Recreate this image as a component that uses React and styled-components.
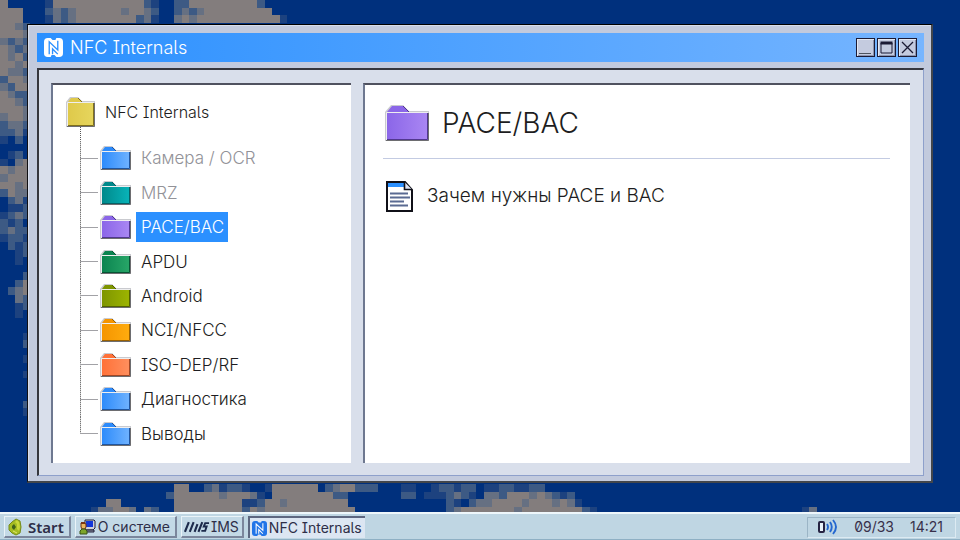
import React, { useId } from "react";
import styled, { createGlobalStyle } from "styled-components";

const Global = createGlobalStyle`
  * { box-sizing: border-box; }
  html, body { margin: 0; padding: 0; }
  body, button {
    font-family: Inter, "Liberation Sans", sans-serif;
    font-feature-settings: "cv08" 1, "cv05" 1, "zero" 1;
  }
  button { margin: 0; cursor: pointer; }
`;

const SHADES = { a: "#1d427f", b: "#3d5a84", c: "#667082", d: "#837d7d" };

const CLOUDS = [
  { col: 0, row: 0, cells: [
    "d.....addddddddddddba..bbdddddddddb",
    "ddd...bcbcddddddcddcb..bcbcddddddddd",
    "ddd...acbcddddddddbca..cdcddddddddddda",
    "ddcb", "dddc", "cbcb", "dcbc", "dcdb", "ddcd", "dccb", "bddc", "cbdd", "dcbb", "ddcb",
    "dddc", "cddc", "bccb", "bbca", "a.b.", "....", ".ab.", "a.cd", "dcdd", "cddd", "ddcd",
    "bdcc", ".bca", ".aab", "abcb", "bab.", "bcbb", "abba", ".bab", "..ab", "..a.", "....",
    "...b", "..bd", ".bcd", "..cb", "..ab", "..a.", "....", "....", "...a", "...b", "....",
    "...a", "....", "...a", "....", "....", "....", "...b", "...a",
  ] },
  { col: 12, row: 64, cells: [
    "...........dd..bcabba..adddddd.bcddbbb...aa..abbabb.aabbaabb",
    "..........bddddddcdddca.ddddddddbb.......bb.aaabcba.ccbdddcdcbab",
    "..dd.......dddddddddaabddcdddddddd.............ba.bccddddcdddcdca",
    "accddc.cb..dddddddddbdcdddddddddddd............bcdddddddcddddddddba...........................ac",
  ] },
];

const FOLDERS = {
  yellow: ["#dfc94a", "#e6d65e", "#80701c"],
  blue: ["#2d8bfb", "#70b3ff", "#1f559f"],
  teal: ["#00898b", "#08b4b9", "#076064"],
  purple: ["#8b66e8", "#aa87f3", "#51378f"],
  green: ["#0b8450", "#28a768", "#075434"],
  olive: ["#7e9500", "#9db500", "#526100"],
  orange: ["#f59500", "#ffac0e", "#9a6100"],
  coral: ["#ff7138", "#ff905f", "#a04725"],
};

const TOPICS = [
  { name: "Камера / OCR", color: "blue", dim: true },
  { name: "MRZ", color: "teal", dim: true },
  { name: "PACE/BAC", color: "purple", selected: true },
  { name: "APDU", color: "green" },
  { name: "Android", color: "olive" },
  { name: "NCI/NFCC", color: "orange" },
  { name: "ISO-DEP/RF", color: "coral" },
  { name: "Диагностика", color: "blue" },
  { name: "Выводы", color: "blue" },
];

const Desktop = styled.div`
  display: grid;
  grid-template-rows: 1fr auto;
  min-height: 100vh;
  background: #00307d;
  color: #1d1d21;
  position: relative;
  overflow: hidden;
`;

const Wallpaper = styled.svg`
  position: absolute;
  inset: 0;
  width: 100%;
  height: 100%;
`;

const Workspace = styled.main`
  position: relative;
  display: flex;
  padding: 24px 27px 29px;
`;

const Window = styled.section`
  flex: 1;
  display: flex;
  flex-direction: column;
  gap: 6px;
  padding: 8px 7px 5px 9px;
  background: #c2cadd;
  border: solid;
  border-width: 1px 2px 2px 1px;
  border-color: #000 #43464b #43464b #101014;
  box-shadow: inset 1px 1px 0 #d8deeb;
`;

const TitleBar = styled.header`
  display: flex;
  align-items: center;
  gap: 7px;
  height: 29px;
  padding: 0 7px;
  background: linear-gradient(90deg, #2b90ff, #76b5ff);
  color: #fff;
`;

const WindowTitle = styled.h1`
  flex: 1;
  margin: 0;
  font-size: 18px;
  font-weight: 300;
  line-height: 24px;
`;

const Controls = styled.div`
  display: flex;
  gap: 2px;
`;

const ControlButton = styled.button`
  width: 19px;
  height: 19px;
  padding: 0;
  border: 1px solid #1b1b35;
  background: #c4cbdf;
  box-shadow: inset 1px 1px 0 #e3e8f2, inset -1px -1px 0 #8c93ac;
  svg { display: block; }
`;

const WindowBody = styled.div`
  flex: 1;
  display: grid;
  grid-template-columns: 300fr 547fr;
  gap: 12px;
  padding: 13px 13px 12px 12px;
  background: #d9dfeb;
  border: solid;
  border-width: 2px 1px 1px 2px;
  border-color: #35363d #8ea0cb #8ea0cb #35363d;
`;

const Panel = styled.div`
  display: flex;
  flex-direction: column;
  background: #fff;
  border: solid;
  border-width: 2px 0 0 2px;
  border-color: #50525f #fff #fff #6e7890;
`;

const TreePanel = styled(Panel).attrs({ as: "nav" })`
  padding: 12px 13px;
`;

const TreeRoot = styled.div`
  display: flex;
  align-items: center;
  height: 30px;
`;

const RootLabel = styled.span`
  padding: 0 10px;
  font-size: 16px;
  font-weight: 300;
  line-height: 30px;
`;

const TreeStem = styled.div`
  height: 14px;
  margin-left: 14px;
  background: repeating-linear-gradient(#555 0 1px, transparent 1px 2px) 0 0 / 1px 100% no-repeat;
`;

const TreeList = styled.ul`
  flex: 1;
  display: flex;
  flex-direction: column;
  margin: 0;
  padding: 0 0 0 14px;
  list-style: none;
`;

const TreeItem = styled.li`
  flex: 1;
  display: flex;
  align-items: center;
`;

const Connector = styled.span`
  align-self: stretch;
  width: 18px;
  margin-right: 2px;
  background:
    linear-gradient(#a2a2a6, #a2a2a6) 0 50% / 100% 1px no-repeat,
    repeating-linear-gradient(#777 0 1px, #d0d0d0 1px 2px) 0 0 / 1px 100% no-repeat;
  ${TreeItem}:last-child & {
    background-size: 100% 1px, 1px 50%;
  }
`;

const TreeLabel = styled.button`
  height: 30px;
  margin-left: 5px;
  padding: 0 4px 0 5px;
  border: 0;
  background: ${(p) => (p.$selected ? "#2b90ff" : "transparent")};
  color: ${(p) => (p.$selected ? "#fff" : p.$dim ? "#929298" : "#1d1d21")};
  font-size: 17px;
  font-weight: 300;
  line-height: 30px;
`;

const ContentPanel = styled(Panel).attrs({ as: "article" })`
  padding: 18px 20px 18px 18px;
`;

const ContentHeader = styled.div`
  display: flex;
  align-items: flex-end;
  gap: 13px;
  padding: 2px 2px 17px;
  border-bottom: 1px solid #c3cbe2;
`;

const ContentTitle = styled.h2`
  margin: 0;
  font-size: 28px;
  font-weight: 300;
  line-height: 36px;
`;

const DocLink = styled.a`
  display: flex;
  align-items: center;
  gap: 14px;
  margin-top: 21px;
  padding-left: 3px;
  color: inherit;
  text-decoration: none;
  font-size: 19px;
  font-weight: 300;
  line-height: 32px;
`;

const Taskbar = styled.footer`
  position: relative;
  display: flex;
  align-items: center;
  gap: 4px;
  height: 28px;
  padding: 2px 4px 1px;
  background: #bfd6e3;
  border-top: 2px solid #eef7fb;
  border-bottom: 1px solid #8fb0c4;
`;

const TaskButton = styled.button`
  display: flex;
  align-items: center;
  gap: ${(p) => p.$gap ?? 2}px;
  height: 22px;
  padding: ${(p) => (p.$tight ? "0 3px 0 2px" : "0 5px 0 3px")};
  border: solid;
  border-width: ${(p) => (p.$active ? "2px 0 0 2px" : "1px 2px 2px 1px")};
  border-color: ${(p) => (p.$active ? "#5d6780" : "#e9f3f8 #7b869c #7b869c #e9f3f8")};
  background: ${(p) => (p.$active ? "#dce6f2" : "#c3d9e6")};
  color: #2e2e48;
  font-size: 14px;
  font-weight: 400;
  line-height: 18px;
  white-space: nowrap;
`;

const StartLabel = styled.span`
  font-family: "Noto Sans", sans-serif;
  font-size: 15px;
  font-weight: 600;
`;

const Tray = styled.div`
  display: flex;
  align-items: center;
  gap: 16px;
  height: 21px;
  margin-left: auto;
  padding: 0 12px 0 10px;
  border: 1px solid;
  border-color: #9bb5c6 #dceaf2 #dceaf2 #9bb5c6;
  color: #38304a;
  font-size: 14px;
  line-height: 18px;
`;

function CloudWallpaper() {
  const cells = [];
  CLOUDS.forEach(({ col, row, cells: rows }) =>
    rows.forEach((line, r) =>
      [...line].forEach((ch, c) => {
        if (SHADES[ch]) {
          cells.push(
            <rect key={`${row + r}-${col + c}`} x={(col + c) * 10} y={(row + r) * 10} width="10" height="10" fill={SHADES[ch]} />
          );
        }
      })
    )
  );
  return (
    <Wallpaper viewBox="0 0 1270 714" preserveAspectRatio="xMinYMin slice" shapeRendering="crispEdges" aria-hidden="true">
      {cells}
    </Wallpaper>
  );
}

function Folder({ color, w, h, tab }) {
  const id = useId();
  const [from, to, dark] = FOLDERS[color];
  const slope = tab - 1;
  const tabEnd = Math.round(w * 0.4);
  return (
    <svg width={w} height={h} viewBox={`0 0 ${w} ${h}`} aria-hidden="true">
      <defs>
        <linearGradient id={id}>
          <stop offset="0" stopColor={from} />
          <stop offset="1" stopColor={to} />
        </linearGradient>
      </defs>
      <path d={`M0 ${h}V${tab}L${slope} 0H${tabEnd}L${tabEnd + slope} ${tab - 1}H${w}V${h}Z`} fill="#c9cacf" />
      <path d={`M2 ${tab}L${slope + 1} 1H${tabEnd}L${tabEnd + slope} ${tab}Z`} fill={from} />
      <path d={`M${tabEnd} 1L${tabEnd + slope} ${tab}`} stroke={dark} strokeWidth="1" fill="none" />
      <path d={`M1.5 ${h - 1}V${tab + 0.5}H${w - 1}`} stroke="#eeeeef" fill="none" />
      <rect x="2" y={tab + 1} width={w - 3} height={h - tab - 2} fill={`url(#${id})`} />
      <path d={`M${w - 1.5} ${tab + 1}V${h - 1.5}H2`} stroke={dark} fill="none" />
      <path d={`M${w - 0.5} ${tab + 1}V${h - 0.5}H1`} stroke="#6d6d70" fill="none" />
    </svg>
  );
}

function NfcMark({ size, plate, line }) {
  return (
    <svg width={size} height={size} viewBox="0 0 20 20" aria-hidden="true">
      <path d="M4 0H7L9 2H12L13 0H16Q20 0 20 4V16Q20 20 16 20H13L11 18H8L7 20H4Q0 20 0 16V4Q0 0 4 0Z" fill={plate} />
      <path d="M5.5 17V4L14.500 12.500V3M9 17V11.500L14.500 17" fill="none" stroke={line} strokeWidth="1.4" />
    </svg>
  );
}

function DocumentIcon() {
  return (
    <svg width="27" height="31" viewBox="0 0 27 31" aria-hidden="true">
      <path d="M1 1H19L26 9V30H1Z" fill="#fff" stroke="#101018" strokeWidth="2" />
      <path d="M2 2H18V6H2Z" fill="#2b90ff" />
      <path d="M18.5 1V8.5H26" fill="#dfe4f3" stroke="#101018" strokeWidth="1.6" />
      <path d="M4 12.5H22M4 16.5H24M4 20.5H18M4 24.5H22" stroke="#5a6a92" strokeWidth="2" />
    </svg>
  );
}

function StartIcon() {
  return (
    <svg width="14" height="18" viewBox="0 0 14 18" aria-hidden="true">
      <path d="M8 1L12 3L13 9L12 15L8 17L4 15L1 12V7L4 4Z" fill="#a5bd21" stroke="#758a1a" />
      <path d="M9 2L11 4L12 9L11 13L9 11V6L7 4Z" fill="#c8d83a" />
      <path d="M6 6L8 9L6 12L4 10V8Z" fill="#41631c" />
      <path d="M5 13L9 15" stroke="#e1e66b" />
    </svg>
  );
}

function SystemIcon() {
  return (
    <svg width="17" height="16" viewBox="0 0 17 16" aria-hidden="true">
      <path d="M6 1H15L16 2V9L14 11H6Z" fill="#d0d0d8" stroke="#20203a" />
      <rect x="7" y="2" width="7" height="6" fill="#1236d8" />
      <path d="M7 11H15V13H7Z" fill="#8c90a0" stroke="#20203a" />
      <path d="M2 4H5L7 5V8L6 10H3L2 8Z" fill="#e9b45e" stroke="#6b3214" />
      <path d="M2 3H6V5H2Z" fill="#7a3514" />
      <path d="M1 15V12L3 10H6L8 12V15Z" fill="#7da529" stroke="#385317" />
    </svg>
  );
}

function ImsLogo() {
  return (
    <svg width="26" height="12" viewBox="0 0 27 12" aria-hidden="true">
      <path d="M1 11L5 1M6 11L10 1M11 11L14 3M15 11L19 1" stroke="#1d2b4c" strokeWidth="2.2" fill="none" />
      <path d="M26 2H22L20.500 5.500H23.500L22 10H18" stroke="#1d2b4c" strokeWidth="2" fill="none" />
    </svg>
  );
}

function SignalIcon() {
  return (
    <svg width="20" height="16" viewBox="0 0 20 16" aria-hidden="true">
      <rect x="1" y="3" width="5" height="10" rx="1" fill="#e9f3fa" stroke="#262342" strokeWidth="2" />
      <path d="M9 5Q11 8 9 11M12 3Q15.500 8 12 13M15 1Q21 8 15 15" fill="none" stroke="#2467cf" strokeWidth="1.9" />
    </svg>
  );
}

export default function App() {
  return (
    <>
      <Global />
      <Desktop>
        <CloudWallpaper />
        <Workspace>
          <Window>
            <TitleBar>
              <NfcMark size={19} plate="#fff" line="#2b90ff" />
              <WindowTitle>NFC Internals</WindowTitle>
              <Controls>
                <ControlButton aria-label="Свернуть">
                  <svg width="17" height="17"><path d="M2 14.500H14" stroke="#4d545f" strokeWidth="1" /></svg>
                </ControlButton>
                <ControlButton aria-label="Развернуть">
                  <svg width="17" height="17"><path d="M3 4H14V14H3Z" fill="none" stroke="#1b1b35" /><path d="M2.500 4H14.500" stroke="#1b1b35" strokeWidth="3" /></svg>
                </ControlButton>
                <ControlButton aria-label="Закрыть">
                  <svg width="17" height="17"><path d="M3 3L14 14M14 3L3 14" stroke="#1b1b35" strokeWidth="1.3" /></svg>
                </ControlButton>
              </Controls>
            </TitleBar>
            <WindowBody>
              <TreePanel>
                <TreeRoot>
                  <Folder color="yellow" w={29} h={30} tab={5} />
                  <RootLabel>NFC Internals</RootLabel>
                </TreeRoot>
                <TreeStem />
                <TreeList>
                  {TOPICS.map((t) => (
                    <TreeItem key={t.name}>
                      <Connector />
                      <Folder color={t.color} w={31} h={24} tab={5} />
                      <TreeLabel $dim={t.dim} $selected={t.selected}>{t.name}</TreeLabel>
                    </TreeItem>
                  ))}
                </TreeList>
              </TreePanel>
              <ContentPanel>
                <ContentHeader>
                  <Folder color="purple" w={44} h={36} tab={7} />
                  <ContentTitle>PACE/BAC</ContentTitle>
                </ContentHeader>
                <DocLink href="#why">
                  <DocumentIcon />
                  Зачем нужны PACE и BAC
                </DocLink>
              </ContentPanel>
            </WindowBody>
          </Window>
        </Workspace>
        <Taskbar>
          <TaskButton $gap={6}><StartIcon /><StartLabel>Start</StartLabel></TaskButton>
          <TaskButton><SystemIcon />О системе</TaskButton>
          <TaskButton $gap={1} $tight><ImsLogo />IMS</TaskButton>
          <TaskButton $active $tight><NfcMark size={15} plate="#2175e8" line="#fff" />NFC Internals</TaskButton>
          <Tray><SignalIcon /><span>09/33</span><span>14:21</span></Tray>
        </Taskbar>
      </Desktop>
    </>
  );
}
